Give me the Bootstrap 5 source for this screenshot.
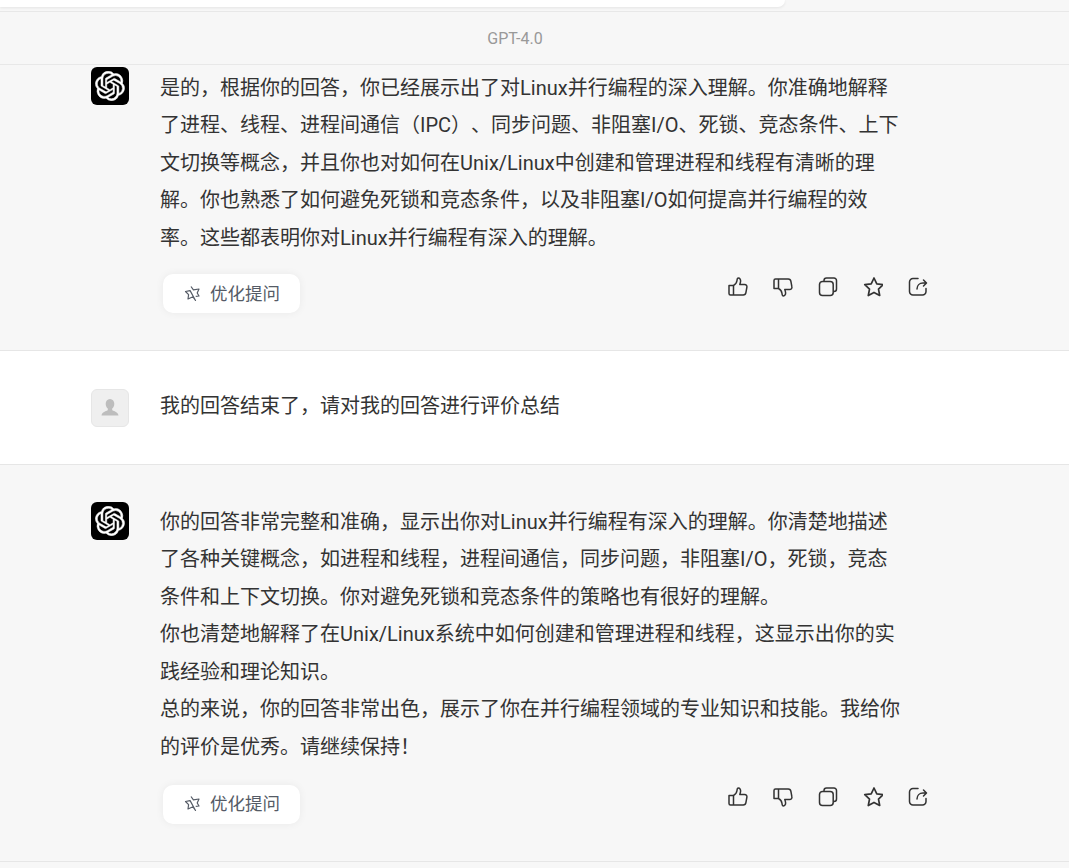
<!DOCTYPE html>
<html lang="zh">
<head>
<meta charset="utf-8">
<link href="https://cdn.jsdelivr.net/npm/bootstrap@5.3.0/dist/css/bootstrap.min.css" rel="stylesheet">
<style>
html,body{height:868px;overflow:hidden;background:#f7f7f7}
body{font-family:Roboto,"Noto Sans CJK SC",sans-serif;color:#333;text-spacing-trim:space-all}
.topbar{height:12px;border-bottom:1px solid #e8e8e8;background:#f7f7f7}
.topcard{height:7px;width:785px;background:#fff;border-radius:0 0 14px 0;box-shadow:0 1px 3px rgba(0,0,0,.08)}
.modelbar{height:53px;border-bottom:1px solid #e8e8e8;color:#999;font-size:16px;padding-right:39px;padding-top:1px}
.msg{padding-left:91px;gap:31px;border-bottom:1px solid #e6e6e6}
.msg-a{background:#f7f7f7}
.msg-u{background:#fff;height:114px;padding-top:38px}
.first{height:286px;padding-top:2px}
.second{height:397px;padding-top:37px}
.ava{width:38px;height:38px;border-radius:6px;background:#000;flex:none;display:flex;align-items:center;justify-content:center}
.ava-u{background:#efefef;border:1px solid #e6e6e6}
.txt{width:745px;font-size:20px;line-height:37.6px;padding-top:1.5px}
.first .txt{padding-top:2.5px}
.txt p{margin:0}
.utxt{line-height:34px;padding-top:0}
.foot{padding-left:3px;width:768px}
.first .foot{margin-top:17px}
.second .foot{margin-top:18px}
.opt{width:137px;height:39px;border-radius:10px;background:#fff;box-shadow:0 0 8px rgba(0,0,0,.06);font-size:17.5px;color:#555b66;gap:8px;padding-left:21px}
.acts{gap:25px;margin-top:3px}
.second .acts{margin-top:2px}
.acts svg{display:block}
</style>
</head>
<body>
<svg width="0" height="0" class="d-block">
<defs>
<symbol id="logo" viewBox="0 0 41 41"><path fill="#fff" stroke="#fff" stroke-width=".7" d="M37.532 16.87a9.963 9.963 0 0 0-.856-8.184 10.078 10.078 0 0 0-10.855-4.835A9.964 9.964 0 0 0 18.306.5a10.079 10.079 0 0 0-9.614 6.977 9.967 9.967 0 0 0-6.664 4.834 10.08 10.08 0 0 0 1.24 11.817 9.965 9.965 0 0 0 .856 8.185 10.079 10.079 0 0 0 10.855 4.835 9.965 9.965 0 0 0 7.516 3.35 10.078 10.078 0 0 0 9.617-6.981 9.967 9.967 0 0 0 6.663-4.834 10.079 10.079 0 0 0-1.243-11.813zM22.498 37.886a7.474 7.474 0 0 1-4.799-1.735c.061-.033.168-.091.237-.134l7.964-4.6a1.294 1.294 0 0 0 .655-1.134V19.054l3.366 1.944a.12.12 0 0 1 .066.092v9.299a7.505 7.505 0 0 1-7.49 7.496zM6.392 31.006a7.471 7.471 0 0 1-.894-5.023c.06.036.162.099.237.141l7.964 4.6a1.297 1.297 0 0 0 1.308 0l9.724-5.614v3.888a.12.12 0 0 1-.048.103l-8.051 4.649a7.504 7.504 0 0 1-10.24-2.744zM4.297 13.62A7.469 7.469 0 0 1 8.2 10.333c0 .068-.004.19-.004.274v9.201a1.294 1.294 0 0 0 .654 1.132l9.723 5.614-3.366 1.944a.12.12 0 0 1-.114.01L7.04 23.856a7.504 7.504 0 0 1-2.743-10.237zm27.658 6.437l-9.724-5.615 3.367-1.943a.121.121 0 0 1 .113-.01l8.052 4.648a7.498 7.498 0 0 1-1.158 13.528v-9.476a1.293 1.293 0 0 0-.65-1.132zm3.35-5.043c-.059-.037-.162-.099-.236-.141l-7.965-4.6a1.298 1.298 0 0 0-1.308 0l-9.723 5.614v-3.888a.12.12 0 0 1 .048-.103l8.05-4.645a7.497 7.497 0 0 1 11.135 7.763zm-21.063 6.929l-3.367-1.944a.12.12 0 0 1-.065-.092v-9.299a7.497 7.497 0 0 1 12.293-5.756 6.94 6.94 0 0 0-.236.134l-7.965 4.6a1.294 1.294 0 0 0-.654 1.132l-.006 11.225zm1.829-3.943l4.33-2.501 4.332 2.5v5l-4.331 2.5-4.331-2.5V18z"/></symbol>
<symbol id="up" viewBox="0 0 20 20"><path d="M1 8.5h4.500v9.500H2.500A1.500 1.500 0 0 1 1 16.500zM5.500 8.500c1.800-.9 3.200-2.700 3.500-5 .1-1.200.2-2.500 1.300-2.500 1.700 0 2.400 1.700 2.300 3.300-.1 1.100-.4 2-.8 3.200h4.800c1.500 0 2.600 1.200 2.300 2.600l-1 5.600c-.2 1.400-1.300 2.300-2.700 2.300H5.500" fill="none" stroke="#333" stroke-width="1.500" stroke-linejoin="round"/></symbol>
<symbol id="down" viewBox="0 0 20 20"><g transform="matrix(1 0 0 -1 0 20)"><path d="M1 8.500h4.500v9.500H2.500A1.500 1.500 0 0 1 1 16.500zM5.500 8.500c1.800-.9 3.200-2.700 3.500-5 .1-1.200.2-2.500 1.300-2.500 1.700 0 2.400 1.700 2.300 3.300-.1 1.100-.4 2-.8 3.200h4.800c1.500 0 2.600 1.200 2.300 2.600l-1 5.600c-.2 1.400-1.300 2.300-2.700 2.300H5.500" fill="none" stroke="#333" stroke-width="1.500" stroke-linejoin="round"/></g></symbol>
<symbol id="copy" viewBox="0 0 20 20"><path d="M6 4.500V3.500A2.500 2.500 0 0 1 8.500 1H16a2.500 2.500 0 0 1 2.500 2.500V12a2.500 2.500 0 0 1-2.500 2.500h-.8" fill="none" stroke="#333" stroke-width="1.500"/><rect x="1.500" y="4.500" width="13.700" height="14" rx="3" fill="none" stroke="#333" stroke-width="1.500"/></symbol>
<symbol id="star" viewBox="0 1 20 20"><path d="M11 2l2.800 5.900 6.400.8-4.700 4.400 1.200 6.400L11 16.400l-5.700 3.100 1.200-6.400-4.700-4.400 6.400-.8z" fill="none" stroke="#333" stroke-width="1.700" stroke-linejoin="round"/></symbol>
<symbol id="share" viewBox="0 0 20 20"><path d="M10 1.500H5A3.500 3.500 0 0 0 1.500 5v9.500A3.500 3.500 0 0 0 5 18h9.500a3.500 3.500 0 0 0 3.500-3.500V11.500" fill="none" stroke="#333" stroke-width="1.500" stroke-linecap="round"/><path d="M9 12c0-3.500 2.500-6 6-6h3M15.500 3l3 3-3 3" fill="none" stroke="#333" stroke-width="1.500" stroke-linecap="round" stroke-linejoin="round"/></symbol>
<symbol id="wand" viewBox="0 0 18 18"><path d="M7 1.500l2.400 3.300 5.600-.8-1.800 4 1.800 3-3.300.3M11.500 15.500l-2.500-3.700-5 2.200.6-4.400-3.100-3.100 4.600-.9z" fill="none" stroke="#555b66" stroke-width="1.200" stroke-linejoin="round"/></symbol>
</defs>
</svg>

<div class="topbar"><div class="topcard"></div></div>
<div class="modelbar d-flex align-items-center justify-content-center">GPT-4.0</div>

<div class="msg msg-a first d-flex">
  <div class="ava"><svg width="30" height="30"><use href="#logo"/></svg></div>
  <div>
    <div class="txt"><p>是的，根据你的回答，你已经展示出了对Linux并行编程的深入理解。你准确地解释了进程、线程、进程间通信（IPC）、同步问题、非阻塞I/O、死锁、竞态条件、上下文切换等概念，并且你也对如何在Unix/Linux中创建和管理进程和线程有清晰的理解。你也熟悉了如何避免死锁和竞态条件，以及非阻塞I/O如何提高并行编程的效率。这些都表明你对Linux并行编程有深入的理解。</p></div>
    <div class="foot d-flex justify-content-between">
      <div class="opt d-flex align-items-center"><svg width="18" height="18"><use href="#wand"/></svg>优化提问</div>
      <div class="acts d-flex">
        <svg width="20" height="20"><use href="#up"/></svg><svg width="20" height="20"><use href="#down"/></svg><svg width="20" height="20"><use href="#copy"/></svg><svg width="20" height="20"><use href="#star"/></svg><svg width="20" height="20"><use href="#share"/></svg>
      </div>
    </div>
  </div>
</div>

<div class="msg msg-u d-flex">
  <div class="ava ava-u"><svg width="22" height="22" viewBox="0 0 22 22"><path fill="#bdbdbd" d="M11 2c2.800 0 4.300 2.200 4.300 4.800 0 2-.8 3.800-2.100 4.800v1.600c1.700.8 5.800 1.800 6.300 5.300H2.500c.5-3.500 4.600-4.500 6.300-5.300v-1.600C7.500 10.600 6.700 8.800 6.700 6.800 6.700 4.200 8.200 2 11 2z"/></svg></div>
  <div class="txt utxt"><p>我的回答结束了，请对我的回答进行评价总结</p></div>
</div>

<div class="msg msg-a second d-flex">
  <div class="ava"><svg width="30" height="30"><use href="#logo"/></svg></div>
  <div>
    <div class="txt"><p>你的回答非常完整和准确，显示出你对Linux并行编程有深入的理解。你清楚地描述了各种关键概念，如进程和线程，进程间通信，同步问题，非阻塞I/O，死锁，竞态条件和上下文切换。你对避免死锁和竞态条件的策略也有很好的理解。</p><p>你也清楚地解释了在Unix/Linux系统中如何创建和管理进程和线程，这显示出你的实践经验和理论知识。</p><p>总的来说，你的回答非常出色，展示了你在并行编程领域的专业知识和技能。我给你的评价是优秀。请继续保持！</p></div>
    <div class="foot d-flex justify-content-between">
      <div class="opt d-flex align-items-center"><svg width="18" height="18"><use href="#wand"/></svg>优化提问</div>
      <div class="acts d-flex">
        <svg width="20" height="20"><use href="#up"/></svg><svg width="20" height="20"><use href="#down"/></svg><svg width="20" height="20"><use href="#copy"/></svg><svg width="20" height="20"><use href="#star"/></svg><svg width="20" height="20"><use href="#share"/></svg>
      </div>
    </div>
  </div>
</div>
<script src="https://cdn.jsdelivr.net/npm/bootstrap@5.3.0/dist/js/bootstrap.bundle.min.js"></script>
</body>
</html>
